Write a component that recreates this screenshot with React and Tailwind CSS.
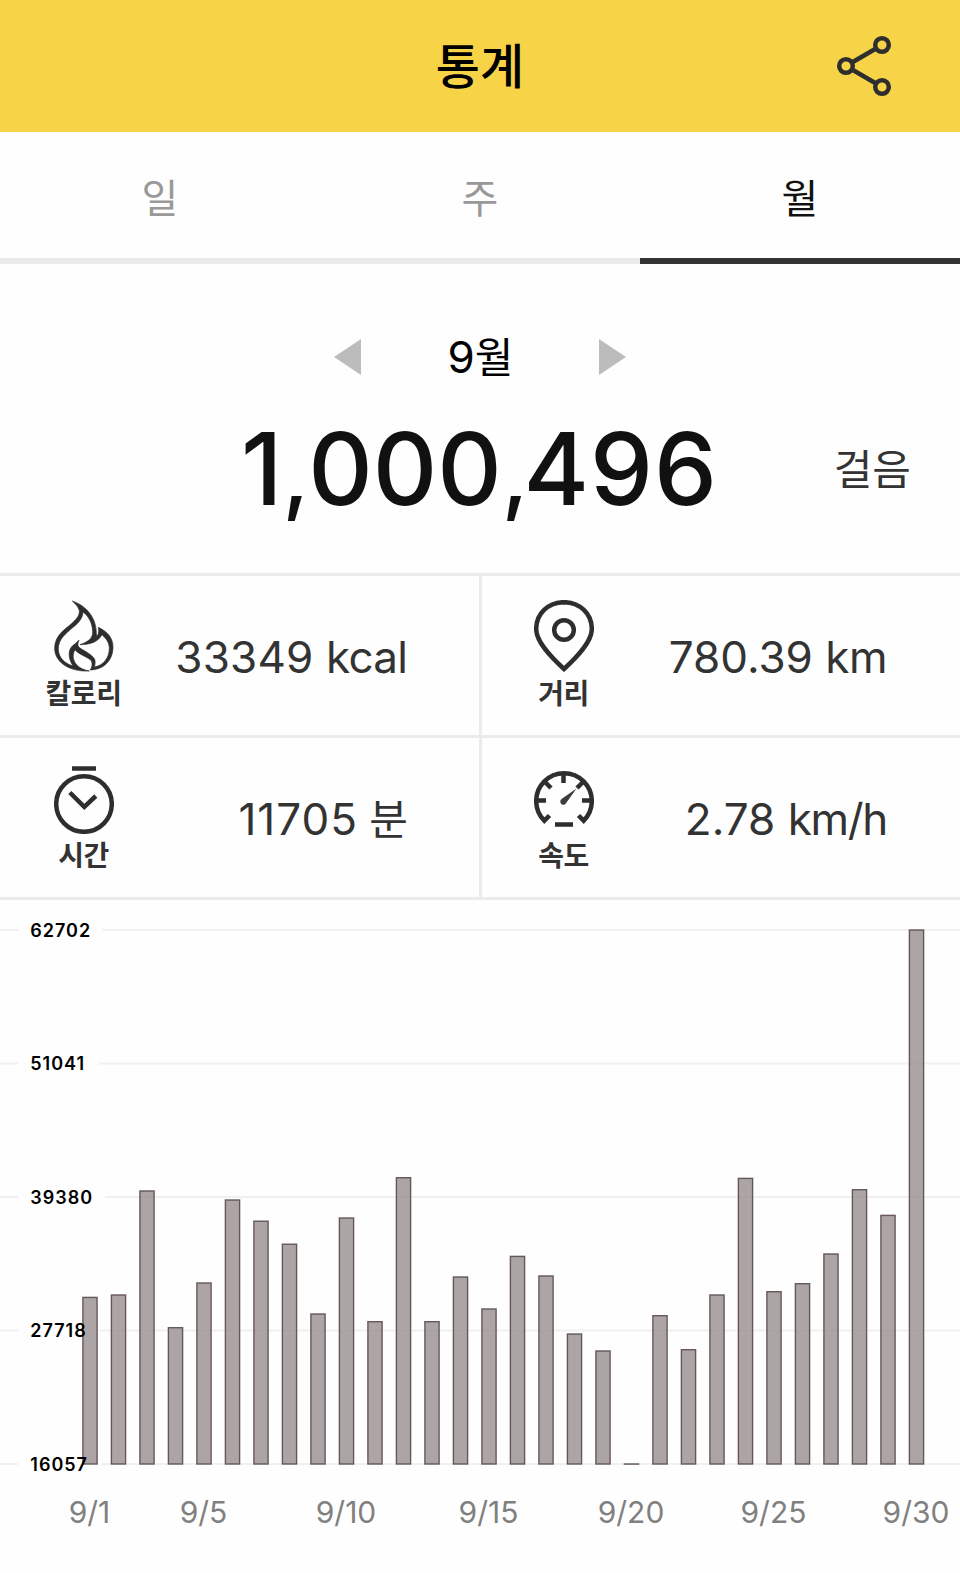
const TABS = [
  { key: 'day', label: '일' },
  { key: 'week', label: '주' },
  { key: 'month', label: '월' },
];

const DAILY_STEPS = [
  30609, 30819, 39904, 27963, 31867, 39117, 37265, 35256, 29159, 37545,
  28487, 41065, 28487, 32391, 29596, 34191, 32479, 27412, 25927, 16057,
  29011, 26041, 30819, 41004, 31107, 31806, 34400, 40017, 37772, 62702,
];

const MIN = 16057;
const MAX = 62702;

// gap is where the grid line picks up again after its label
const GRID = [
  { value: 62702, gap: 102.5 },
  { value: 51041, gap: 99 },
  { value: 39380, gap: 105 },
  { value: 27718, gap: 99.5 },
  { value: 16057, gap: 101 },
];

const DAY_LABELS = [1, 5, 10, 15, 20, 25, 30];

const toX = (day) => 90 + (day - 1) * 28.5;
const toY = (value) => 564 - ((value - MIN) / (MAX - MIN)) * 534;

function ShareIcon() {
  return (
    <svg width="56" height="62" viewBox="0 0 56 62" fill="none" stroke="#2e2e2e" strokeWidth="4.500">
      <path d="M16 27.500L40 13.500M16 34.500L40 48.500" />
      <circle cx="10" cy="31" r="6.800" />
      <circle cx="46" cy="10" r="6.800" />
      <circle cx="46" cy="52" r="6.800" />
    </svg>
  );
}

function FlameIcon() {
  return (
    <svg width="60" height="72" viewBox="42 30 180 216" fill="#2e2e2e" stroke="#2e2e2e" strokeWidth="2">
      <path
        fillRule="evenodd"
        d="M97 33C140 48 172 85 169 138L174 134Q178 124 175 112C203 125 220 145 219 174C218 212 190 240 150 240C157 232 158 222 154 212C142 200 115 193 105 179C97 192 98 208 108 222C117 234 130 239 148 243C90 246 44 218 44 175C44 145 62 127 85 109C108 90 119 78 118 62C115 50 107 43 97 33ZM129 66C145 78 157 98 158 125C158 143 150 153 120 164C150 163 172 158 186 134C198 145 208 158 208 174C208 202 192 226 163 231C166 222 166 215 164 208C155 192 130 182 117 172C112 166 113 160 117 150Q108 160 97 168C84 180 84 205 99 228C72 220 56 202 55 178C55 155 66 140 92 118C112 102 128 88 129 66Z"
      />
    </svg>
  );
}

function PinIcon() {
  return (
    <svg width="60" height="72" viewBox="0 0 60 72" fill="none" stroke="#2e2e2e" strokeWidth="4.500">
      <path d="M30 2.200C14 2.200 2.200 14 2.200 29C2.200 42 17 57 30 69C43 57 57.800 42 57.800 29C57.800 14 46 2.200 30 2.200Z" />
      <circle cx="30" cy="30" r="9.800" />
    </svg>
  );
}

function TimerIcon() {
  return (
    <svg width="60" height="72" viewBox="0 0 60 72" fill="none" stroke="#2e2e2e" strokeWidth="4.500">
      <path d="M18 6.500H42" />
      <circle cx="30" cy="42" r="27.800" />
      <path d="M15.800 30.500L30.300 44.800L41.800 34" />
    </svg>
  );
}

function GaugeIcon() {
  return (
    <svg width="60" height="72" viewBox="0 0 60 72" fill="none" stroke="#2e2e2e" strokeWidth="4.500">
      <path d="M15.500 53.500L10.300 58.700A27.800 27.800 0 1 1 49.700 58.700L44.500 53.500" />
      <path d="M29.500 11V21M2 38.500H12M48 38.500H58M10 19L17 26M50 19L43 26" />
      <path d="M21 62.500H39" />
      <path d="M42.500 26.500L32.500 40.500A3.200 3.200 0 1 1 27.500 37Z" fill="#3d3d3d" stroke="none" />
    </svg>
  );
}

function Stat({ icon, label, className, children }) {
  return (
    <div className={`flex h-[162px] items-center border-b-[3px] border-[#ebebeb] ${className}`}>
      <div className="flex w-[164px] flex-col items-center pb-0.5">
        {icon}
        <span className="mt-1.5 h-8 pr-px text-[28px] leading-8 font-bold tracking-[-0.5px]">{label}</span>
      </div>
      <span className="flex-1 pt-[3px] text-right text-[44px] leading-[52px] whitespace-nowrap">{children}</span>
    </div>
  );
}

function StepChart() {
  return (
    <svg className="block" width="960" height="673" viewBox="0 0 960 673">
      {GRID.map(({ value, gap }) => (
        <path
          key={value}
          d={`M0 ${toY(value)}H18M${gap} ${toY(value)}H960`}
          stroke="#f0f0f0"
          strokeWidth="1.800"
        />
      ))}
      {DAILY_STEPS.map((steps, i) => (
        <rect
          key={i}
          x={toX(i + 1) - 7.1}
          y={toY(steps)}
          width="14.200"
          height={Math.max(564 - toY(steps), 0.1)}
          fill="#988f8f"
          fillOpacity="0.800"
          stroke="#5f5252"
          strokeOpacity="0.950"
          strokeWidth="1.400"
        />
      ))}
      {GRID.map(({ value }) => (
        <text
          key={value}
          x="30.300"
          y={toY(value) + 6.6}
          fill="#000"
          className="text-[18px] font-semibold tracking-[1px]"
        >
          {value}
        </text>
      ))}
      {DAY_LABELS.map((day) => (
        <text
          key={day}
          x={toX(day) - 0.5}
          y="623.300"
          textAnchor="middle"
          fill="#808080"
          className="text-[30px]"
        >
          {`9/${day}`}
        </text>
      ))}
    </svg>
  );
}

export default function App() {
  const active = 'month';

  return (
    <div className="h-[1573px] w-[960px] overflow-hidden bg-[#fefefe] font-['Inter','Noto_Sans_CJK_KR',sans-serif] text-[#333]">
      <header className="grid h-[132px] grid-cols-3 items-center bg-[#f7d347]">
        <h1 className="col-start-2 pt-px text-center text-[48px] leading-none font-medium text-black">통계</h1>
        <button className="justify-self-end pr-[68px]">
          <ShareIcon />
        </button>
      </header>

      <nav className="grid h-[132px] grid-cols-3">
        {TABS.map((tab) => (
          <button
            key={tab.key}
            className={
              tab.key === active
                ? 'border-b-[6px] border-[#333] pt-2 text-[40px] text-[#111]'
                : 'border-b-[6px] border-[#ebebeb] pt-2 text-[40px] text-[#999]'
            }
          >
            {tab.label}
          </button>
        ))}
      </nav>

      <section className="h-[309px] pt-[63px]">
        <div className="flex h-[60px] items-center justify-center">
          <svg width="27" height="36" viewBox="0 0 27 36" fill="#bcbcbc">
            <path d="M27 0V36L0 18Z" />
          </svg>
          <span className="w-[238px] text-center text-[44px] leading-[60px] text-black">
            9<span className="text-[42px] leading-none tracking-[-1px]">월</span>
          </span>
          <svg width="27" height="36" viewBox="0 0 27 36" fill="#bcbcbc">
            <path d="M0 0V36L27 18Z" />
          </svg>
        </div>
        <div className="mt-[22px] grid h-[120px] grid-cols-[1fr_auto_1fr] items-center">
          <span className="col-start-2 pr-px text-[100px] leading-[120px] font-medium text-[#111]">
            1<span className="text-[88px] leading-none tracking-[-1px]">,</span>
            000<span className="text-[88px] leading-none tracking-[-5px]">,</span>
            <span className="tracking-[1px]">496</span>
          </span>
          <span className="pt-px pr-[49px] text-right text-[42px] leading-none">걸음</span>
        </div>
      </section>

      <section className="grid grid-cols-[482px_1fr] border-t-[3px] border-[#ebebeb]">
        <Stat icon={<FlameIcon />} label="칼로리" className="border-r-[3px] pr-[72px] pl-0.5">
          <span className="tracking-[0.2px]">33349 </span>
          <span className="tracking-[-0.8px]">kcal</span>
        </Stat>
        <Stat icon={<PinIcon />} label="거리" className="pr-[73px]">
          780.39 <span className="tracking-[-0.5px]">km</span>
        </Stat>
        <Stat icon={<TimerIcon />} label="시간" className="border-r-[3px] pr-[71px] pl-0.5">
          <span className="tracking-[1px]">11705</span>
          <span className="tracking-[-1px]"> </span>
          <span className="text-[42px] leading-none">분</span>
        </Stat>
        <Stat icon={<GaugeIcon />} label="속도" className="pr-[73px]">
          2.78 <span className="tracking-[-1.3px]">km/h</span>
        </Stat>
      </section>

      <StepChart />
    </div>
  );
}
